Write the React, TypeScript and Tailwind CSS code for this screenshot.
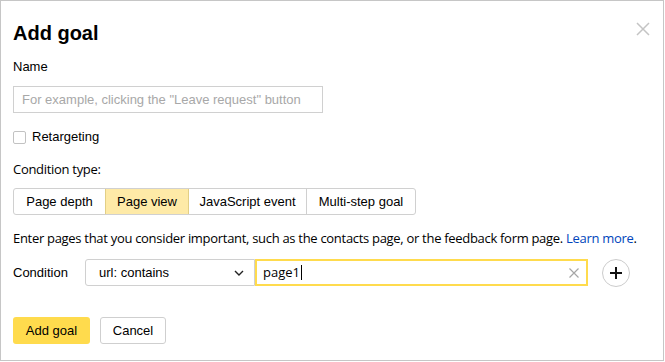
export default function App() {
  return (
    <div className="relative w-[664px] h-[361px] border border-[#c6c6c6] bg-white px-[12px] pt-[20px] text-black font-['Liberation_Sans',Arial,sans-serif]">
      <button className="absolute right-[13px] top-[21px] w-[14px] h-[14px] text-[#c4c4c4]">
        <svg viewBox="0 0 14 14" width="14" height="14" fill="none" stroke="currentColor" strokeWidth="1.5">
          <path d="M1 1l12 12M13 1L1 13" />
        </svg>
      </button>

      <h1 className="text-[20px] leading-[24px] font-bold">Add goal</h1>

      <div className="mt-[14px] text-[13px] leading-[16px]">Name</div>
      <input
        className="mt-[11px] block w-[310px] h-[27px] border border-[#d0d0d0] px-[8px] text-[13px] outline-none placeholder:text-[#a8a8a8]"
        placeholder={'For example, clicking the "Leave request" button'}
      />

      <label className="mt-[16px] flex items-center h-[16px] gap-[6px] text-[13px] leading-[16px]">
        <span className="w-[13px] h-[13px] rounded-[2px] border border-[#c2c2c2] bg-white" />
        Retargeting
      </label>

      <div className="mt-[16px] text-[13px] leading-[16px] font-['Open_Sans',sans-serif] tracking-[-0.3px]">Condition type:</div>

      <div className="mt-[11px] flex w-fit h-[27px] rounded-[3px] border border-[#d0d0d0] text-[13px] overflow-hidden">
        <div className="w-[91px] flex items-center justify-center">Page depth</div>
        <div className="w-[84px] flex items-center justify-center bg-[#feeaa7] border-x border-[#e2cf86]">Page view</div>
        <div className="w-[118px] flex items-center justify-center border-r border-[#d0d0d0]">JavaScript event</div>
        <div className="w-[108px] flex items-center justify-center">Multi-step goal</div>
      </div>

      <p className="mt-[15px] text-[13px] leading-[16px] font-['Open_Sans',sans-serif] tracking-[-0.3px]">
        Enter pages that you consider important, such as the contacts page, or the feedback form page.{' '}
        <a className="text-[#0044bb]">Learn more</a>.
      </p>

      <div className="mt-[13px] flex items-center h-[27px] text-[13px]">
        <span className="w-[72px]">Condition</span>
        <div className="w-[170px] h-[27px] flex items-center justify-between border border-[#d0d0d0] rounded-l-[3px] pl-[13px] pr-[10px]">
          <span>url: contains</span>
          <svg viewBox="0 0 10 6" width="10" height="6" fill="none" stroke="#222" strokeWidth="1.4">
            <path d="M1 1l4 4 4-4" />
          </svg>
        </div>
        <div className="w-[333px] h-[27px] flex items-center border-2 border-[#ffdb4d] pl-[6px] pr-[7px]">
          <span className="font-['Open_Sans',sans-serif]">page1</span>
          <span className="w-px h-[15px] bg-black ml-[1px]" />
          <svg className="ml-auto" viewBox="0 0 10 10" width="10" height="10" fill="none" stroke="#a6a6a6" strokeWidth="1.2">
            <path d="M0.5 0.5l9 9M9.5 0.5l-9 9" />
          </svg>
        </div>
        <button className="ml-[14px] w-[28px] h-[28px] rounded-full border border-[#cccccc] flex items-center justify-center">
          <svg viewBox="0 0 12 12" width="12" height="12" stroke="#111" strokeWidth="2">
            <path d="M6 0v12M0 6h12" />
          </svg>
        </button>
      </div>

      <div className="mt-[31px] flex gap-[10px] text-[13px]">
        <button className="w-[77px] h-[27px] rounded-[3px] bg-[#ffdb4d]">Add goal</button>
        <button className="w-[66px] h-[27px] rounded-[3px] border border-[#cfcfcf] bg-white">Cancel</button>
      </div>
    </div>
  );
}
